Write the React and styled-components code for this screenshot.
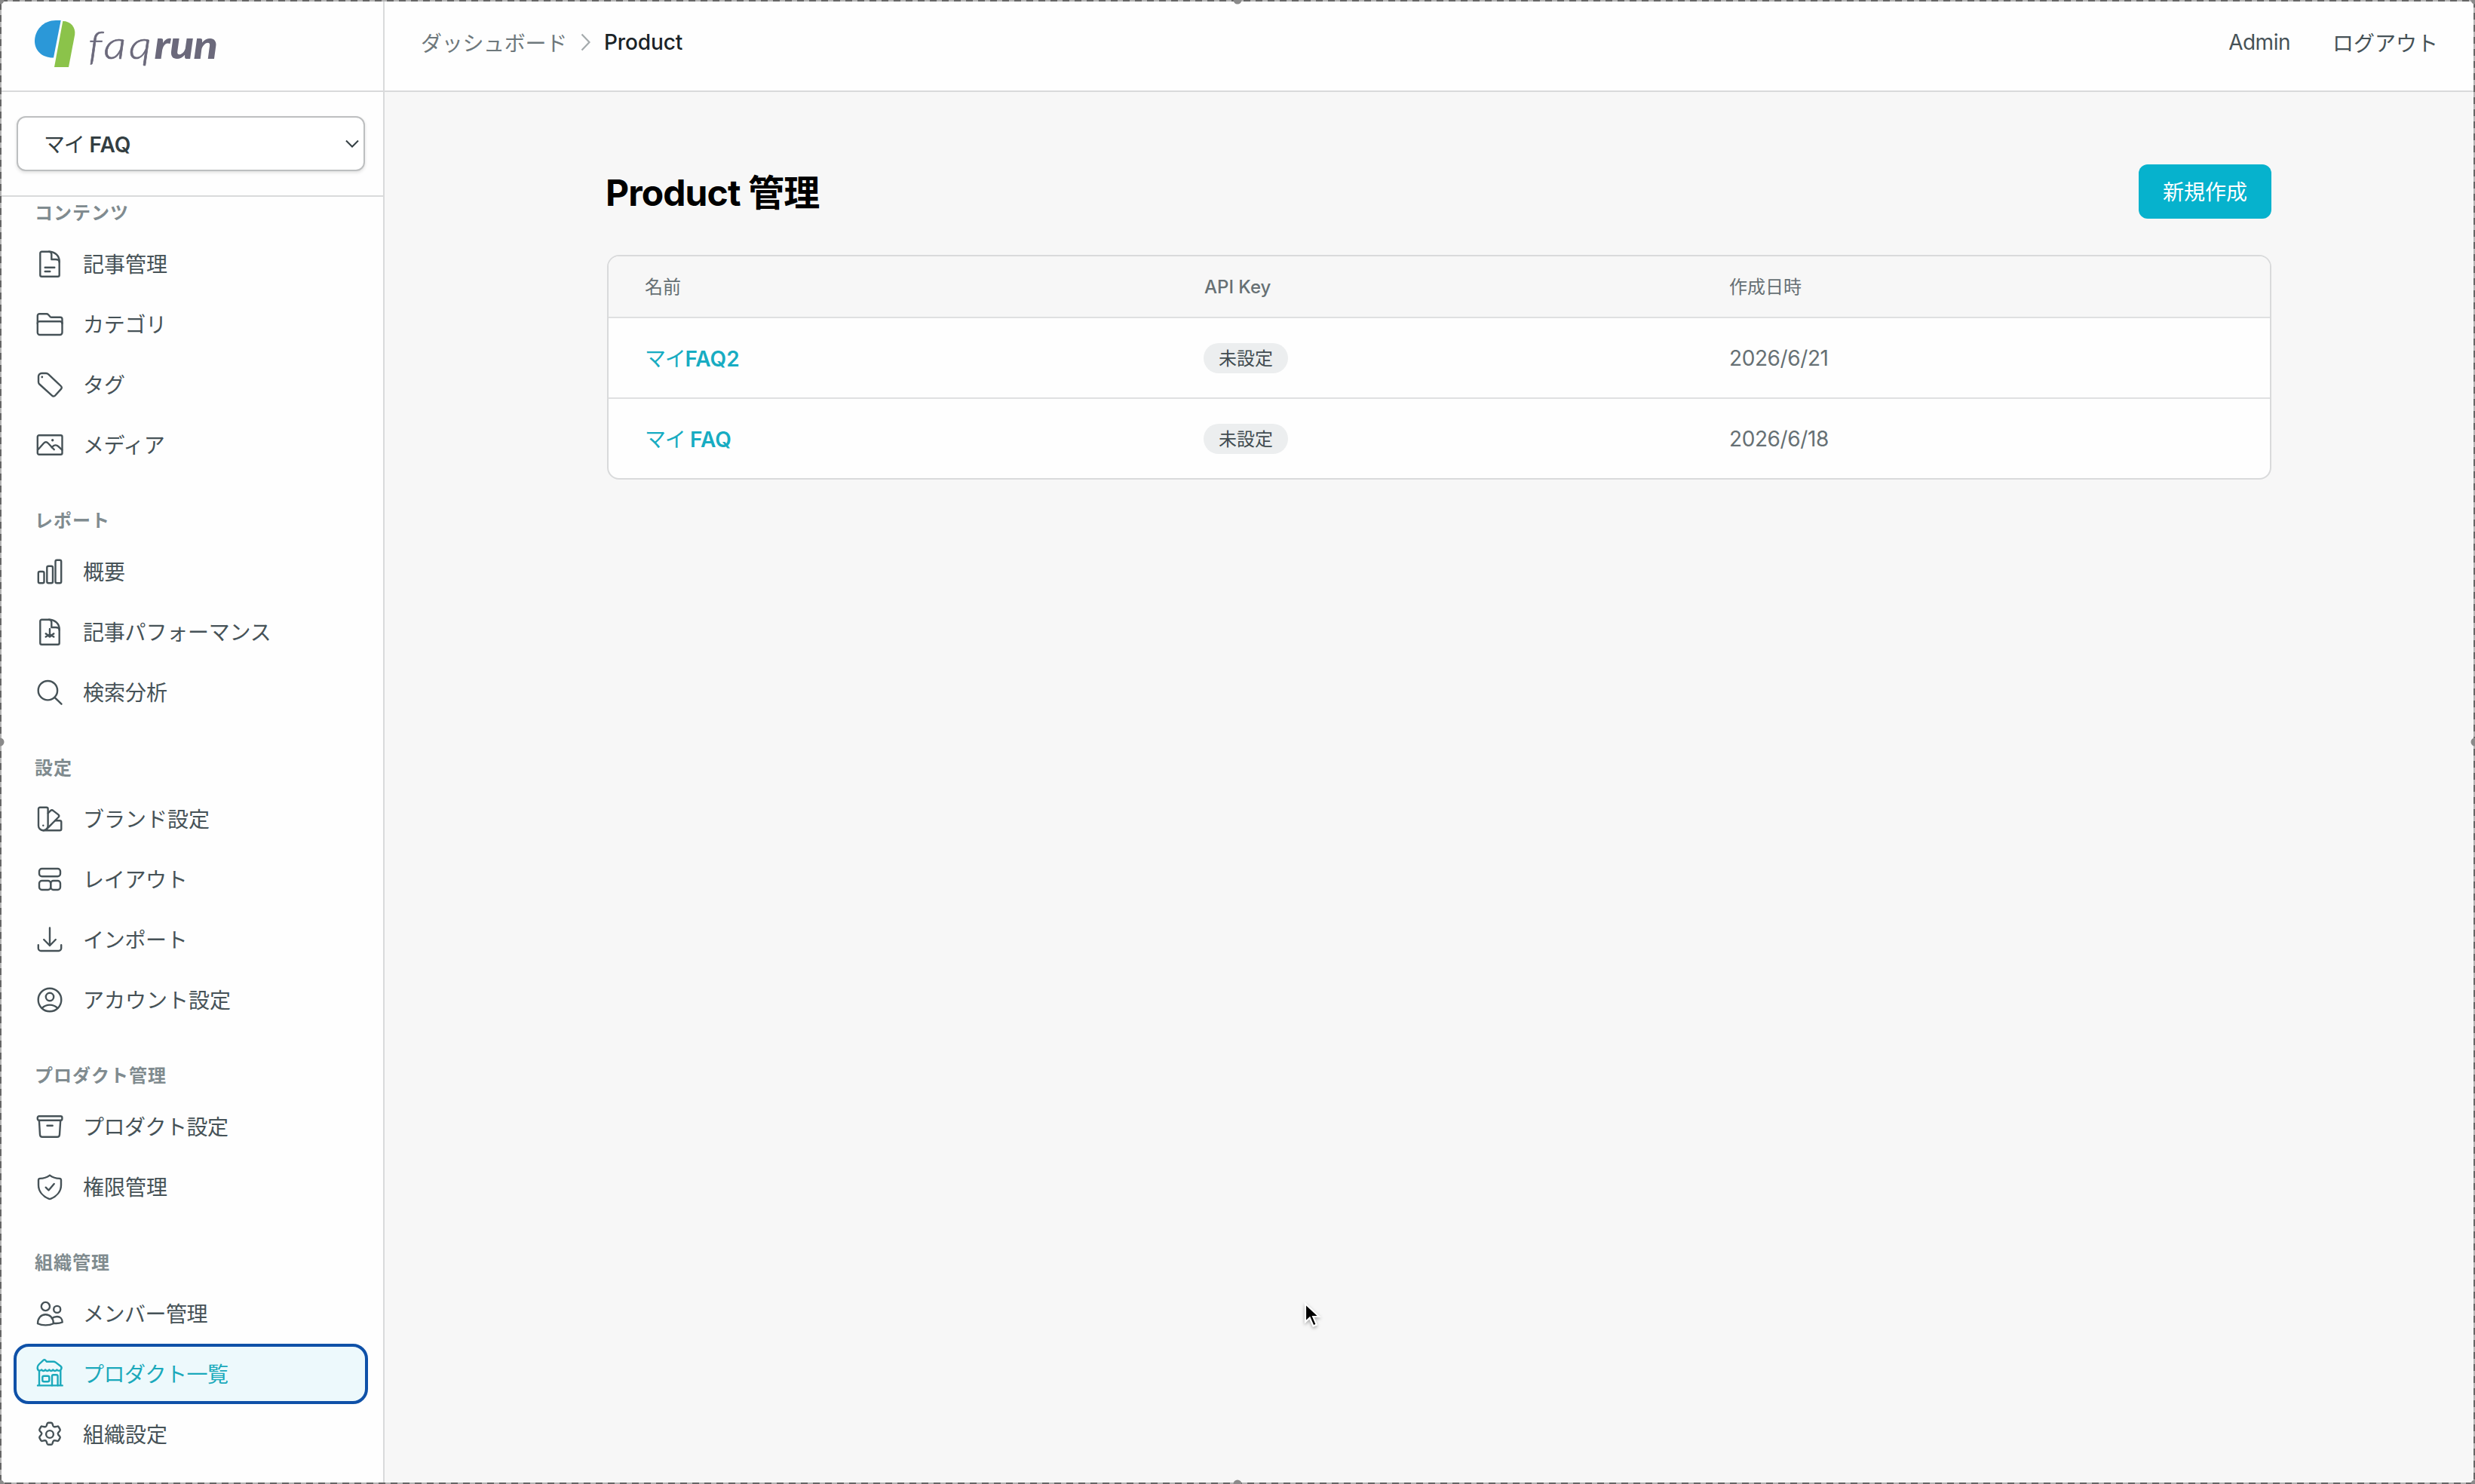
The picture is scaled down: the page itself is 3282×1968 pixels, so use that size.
import React from "react";
import styled, { createGlobalStyle } from "styled-components";

const GlobalStyle = createGlobalStyle`
  * {
    box-sizing: border-box;
  }

  body {
    margin: 0;
    overflow: hidden;
    font-family: Inter, "Noto Sans CJK JP", sans-serif;
    font-size: 28px;
    color: #465257;
    background: #f7f7f7;
  }
`;

const Wrapper = styled.div`
  position: relative;
  display: flex;
  width: 3282px;
  height: 1968px;
  overflow: hidden;
`;

const Sidebar = styled.aside`
  display: flex;
  flex-direction: column;
  flex: none;
  width: 510px;
  background: #fefefe;
  border-right: 2px solid #d9dadb;
`;

const LogoArea = styled.div`
  display: flex;
  flex: none;
  height: 122px;
  padding: 26px 0 0 45px;
  border-bottom: 2px solid #d9dadb;
`;

const LogoMark = styled.svg`
  flex: none;
  width: 56px;
  height: 64px;
`;

const LogoText = styled.div`
  margin-left: 16px;
  font-family: Lato, sans-serif;
  font-size: 51px;
  font-style: italic;
  font-weight: 300;
  line-height: 66px;
  letter-spacing: 3.2px;
  color: #6b697b;
  transform: scaleX(1.17);
  transform-origin: left center;
  -webkit-text-stroke: 0.6px #6b697b;

  & > b {
    font-weight: 900;
    letter-spacing: -0.8px;
    -webkit-text-stroke: 0;
  }
`;

const SelectArea = styled.div`
  flex: none;
  height: 139px;
  padding: 32px 24px 0 22px;
  border-bottom: 2px solid #d9dadb;
`;

const SelectBox = styled.div`
  display: flex;
  justify-content: space-between;
  align-items: center;
  height: 73px;
  padding: 0 6px 0 34px;
  border: 2px solid #bdbfc0;
  border-radius: 12px;
  background: #fff;
  box-shadow: 0 2px 4px rgba(0, 0, 0, 0.12);
  font-weight: 600;
  color: #333e42;

  & > div {
    padding-bottom: 2px;
  }
`;

const Kana = styled.span`
  font-weight: 400;
  letter-spacing: -1.3px;
`;

const Nav = styled.nav`
  display: flex;
  flex-direction: column;
  gap: 40px;
  padding: 1px 20px 0 18px;
`;

const SectionLabel = styled.div`
  height: 40px;
  margin-bottom: 8px;
  padding-left: 28px;
  font-size: 24px;
  font-weight: 700;
  line-height: 42px;
  letter-spacing: 1px;
  color: #808b8f;
`;

const NavItem = styled.div`
  display: flex;
  align-items: center;
  height: 80px;
  padding-left: 26px;
  border: 4px solid ${(props) => (props.$active ? "#0f51a8" : "transparent")};
  border-radius: 20px;
  background: ${(props) => (props.$active ? "#edf9fc" : "transparent")};
  color: ${(props) => (props.$active ? "#1ba9bb" : "#465257")};
  letter-spacing: ${(props) => props.$spacing ?? 0}px;
  white-space: nowrap;

  & > span {
    padding-bottom: 3px;
  }
`;

const Icon = styled.svg`
  flex: none;
  width: 36px;
  height: 36px;
  margin-right: 26px;
  overflow: visible;
  fill: none;
  stroke: currentColor;
  stroke-width: 2.4;
  stroke-linecap: round;
  stroke-linejoin: round;

  & .dot {
    fill: currentColor;
    stroke: none;
  }
`;

const Main = styled.main`
  flex: 1;
  min-width: 0;
`;

const Header = styled.header`
  display: flex;
  justify-content: space-between;
  height: 122px;
  padding: 0 49px 8px 48px;
  background: #fefefe;
  border-bottom: 2px solid #d9dadb;
`;

const Breadcrumb = styled.div`
  display: flex;
  align-items: center;
  color: #6e787c;

  & > span {
    letter-spacing: -0.3px;
  }

  & > svg {
    margin: 0 18px 0 18px;
  }

  & > strong {
    font-weight: 500;
    letter-spacing: -0.1px;
    color: #1a2327;
  }
`;

const HeaderLinks = styled.div`
  display: flex;
  align-items: center;
  gap: 56px;

  & > :first-child {
    letter-spacing: -0.5px;
  }
`;

const Content = styled.section`
  width: 2207px;
  margin: 96px auto 0 295px;
`;

const TitleRow = styled.div`
  display: flex;
  justify-content: space-between;
  align-items: center;
  height: 72px;
  margin-bottom: 48px;
`;

const Title = styled.h1`
  margin: 0 0 5px -2px;
  font-size: 48px;
  font-weight: 700;
  letter-spacing: -0.9px;
  color: #000;
`;

const CreateBtn = styled.button`
  width: 176px;
  height: 72px;
  padding: 0 0 2px;
  border: none;
  border-radius: 12px;
  background: #06b2cd;
  color: #fff;
  font-family: inherit;
  font-size: 28px;
  font-weight: 400;
`;

const Table = styled.div`
  border: 2px solid #d9dadb;
  border-radius: 16px;
  overflow: hidden;
  background: #fefefe;
`;

const Row = styled.div`
  display: grid;
  grid-template-columns: 742px 696px 1fr;
  align-items: center;
  height: 107px;
  border-bottom: 2px solid #dfe0e1;
  color: #667074;

  &:last-child {
    height: 105px;
    border-bottom: none;
  }
`;

const Cell = styled.div`
  padding-left: 48px;
`;

const HeadRow = styled(Row)`
  height: 82px;
  background: #f7f7f7;
  font-size: 24px;
`;

const HeadCell = styled(Cell)`
  padding-bottom: ${(props) => (props.$latin ? 0 : 3)}px;
  font-weight: ${(props) => (props.$latin ? 500 : 400)};
`;

const NameLink = styled.a`
  display: inline-block;
  padding-bottom: 2px;
  font-weight: 600;
  color: #17acc2;
`;

const DateCell = styled(Cell)`
  letter-spacing: -0.4px;
`;

const Badge = styled.span`
  display: flex;
  justify-content: center;
  align-items: center;
  width: 112px;
  height: 40px;
  margin-left: -1px;
  padding-bottom: 2px;
  border-radius: 20px;
  background: #eceeef;
  color: #414c51;
  font-size: 24px;
`;

const Cursor = styled.svg`
  position: absolute;
  top: 1724px;
  left: 1726px;
  filter: drop-shadow(0 2px 2px rgba(0, 0, 0, 0.3));
`;

// dashed selection frame that lies over the whole window
const Frame = styled.svg`
  position: absolute;
  inset: 0;
  pointer-events: none;
`;

const FILE = (
  <>
    <path d="M5.3 3.7a2 2 0 0 1 2-2H17C25 1.7 30.7 7.5 30.7 14.5v18.2a2 2 0 0 1-2 2H7.3a2 2 0 0 1-2-2Z" />
    <path d="M17 1.7c2.3 0 3.3 1.3 3.3 3.500V12h5.200c3 0 5.200 1 5.200 3.500" />
  </>
);

const ICONS = {
  article: (
    <>
      {FILE}
      <path d="M11.7 22.7h12.600M11.700 28h6.600" />
    </>
  ),
  folder: (
    <>
      <path d="M1.8 29V6.800a2.600 2.600 0 0 1 2.600-2.600h9.300c1 0 1.700.3 2.300 1l2.300 2.600c.6.600 1.300.9 2.200.9h11.400a2.600 2.600 0 0 1 2.600 2.600V29a3 3 0 0 1-3 3H4.800a3 3 0 0 1-3-3Z" />
      <path d="M1.800 17c0-1.800 1-2.700 2.700-2.700h27.300c1.700 0 2.700.9 2.700 2.700" />
    </>
  ),
  tag: (
    <>
      <path d="M3 7.500A4.300 4.300 0 0 1 7.300 3H13c1.200 0 2.200.4 3 1.200L32.800 20c1.200 1.200 1.200 2.700.2 3.900l-7.800 8.600c-1.200 1.300-3 1.300-4.200.1L4.300 17.500A4 4 0 0 1 3 14.500Z" />
      <circle className="dot" cx="7.800" cy="8" r="1.400" />
    </>
  ),
  media: (
    <>
      <rect x="1.800" y="5.200" width="32.700" height="25.600" rx="2" />
      <path d="m2 24.700 8-9c1.800-2 4-2 5.800 0l8 8.500M20.500 21.500l1.500-1.500c2-2 5.200-2 7.200-.1l5.100 4.700" />
      <circle className="dot" cx="21.700" cy="11.700" r="1.700" />
    </>
  ),
  bars: (
    <>
      <rect x="2.800" y="18" width="7.700" height="15.300" rx="2" />
      <rect x="14.300" y="10.700" width="7.700" height="22.600" rx="2" />
      <rect x="25.500" y="2.800" width="7.700" height="30.500" rx="2" />
    </>
  ),
  performance: (
    <>
      {FILE}
      <path d="M18 14v10.500M12.700 20.200l5.300 4.300 5.300-4.300M12.700 24.600l4-2.600M23.300 24.600l-4-2.600" />
    </>
  ),
  search: (
    <>
      <circle cx="15.400" cy="15.700" r="12.700" />
      <path d="m24.700 25.200 8.800 8.500" />
    </>
  ),
  brand: (
    <>
      <path d="M3 4.700a2 2 0 0 1 2-2h8.600a2 2 0 0 1 2 2V27a6.300 6.300 0 0 1-12.600 0Z" />
      <path d="m15.700 10.500 3.300-3.300c1.100-1.100 2.500-1.100 3.600-.1l6.800 5.300c1.100 1 1.100 2.100.3 3.100L13.800 31.700" />
      <path d="M25.500 20.300h5.800a2 2 0 0 1 2 2v9a2 2 0 0 1-2 2h-22" />
      <circle className="dot" cx="9.300" cy="26.700" r="1.200" />
    </>
  ),
  layout: (
    <>
      <rect x="4" y="4" width="28" height="10.300" rx="3.500" />
      <rect x="4" y="20" width="15.200" height="12" rx="3.500" />
      <rect x="19.200" y="20" width="12.800" height="12" rx="3.500" />
    </>
  ),
  download: (
    <>
      <path d="M18 2.500V26M10.200 18l7.800 8 7.800-8" />
      <path d="M2.800 25.300v4.200a3.500 3.500 0 0 0 3.500 3.500h23.400a3.500 3.500 0 0 0 3.500-3.500v-4.200" />
    </>
  ),
  account: (
    <>
      <circle cx="18" cy="18" r="15.300" />
      <circle cx="18" cy="14" r="5.200" />
      <path d="M7.700 28.800c2.800-2.700 6.300-4.200 10.300-4.200s7.500 1.500 10.300 4.200" />
    </>
  ),
  archive: (
    <>
      <rect x="1.800" y="4.200" width="32.600" height="5.600" rx="2" />
      <path d="M3.900 10 5 28.700c.1 2 1.300 3.100 3.200 3.100h19.600c1.900 0 3.100-1.100 3.200-3.100L32.200 10M14.500 16.700h7.200" />
    </>
  ),
  shield: (
    <>
      <path d="M18 2.600C14.300 5.300 9.500 6.800 5 6.900c-1.300.1-2 .8-2 2.100v6.500C3 24 9 30.500 16.500 33.700c1 .4 2 .4 3 0C27 30.500 33 24 33 15.500V9c0-1.300-.7-2-2-2.100-4.500-.1-9.300-1.600-13-4.300Z" />
      <path d="m12.700 18.700 3.800 3.800 7.200-8.500" />
    </>
  ),
  members: (
    <>
      <circle cx="12.400" cy="8.500" r="5.600" />
      <circle cx="27.700" cy="12.400" r="4.500" />
      <path d="M2 31.200C2 24 6.500 19.300 12.400 19.300S22.900 24 22.900 31.200c-3 1.500-6.700 2.200-10.500 2.200S5 32.700 2 31.200Z" />
      <path d="M20.800 24.300c2-1.600 4.300-2.300 6.900-2.300 4 0 7 3 7 7.500-3.700 1.500-7.700 1.800-11.700 1.300" />
    </>
  ),
  store: (
    <>
      <path d="M2.300 12.300c-1.400-3-.4-5.300 1.700-7.300L9.500-.2c1-.9 1.800-.9 2.600 0l1.700 1.900h9.400c.8 0 1.500.2 2.200.7l7 5.300c1.400 1.200 1.500 3 .3 4.800-1.800 1.700-3.800 1.700-5.200 0-1.700 2-3.700 2-5.200 0-1.500 2-3.500 2-5 0-1.600 2-3.600 2-5.200 0-1.500 2-3.500 2-5 0-1.400 1.500-3.300 1.500-5-.2Z" />
      <path d="M4 14v19.300M32.300 14v19.300M2 33.400h32.700" />
      <rect x="8.300" y="20.700" width="9" height="7.500" rx="2" />
      <path d="M21 33.300V21a1.800 1.800 0 0 1 1.800-1.800h4A1.800 1.800 0 0 1 28.600 21v12.300" />
    </>
  ),
  gear: (
    <>
      <path d="M14.600 3.900c.3-.8.900-1.200 1.700-1.200h3.400c.8 0 1.400.4 1.700 1.200l1 3c.4 1 1.300 1.500 2.300 1.300l3.200-.6c.8-.2 1.500.1 1.900.8l1.700 3c.4.700.3 1.400-.2 2l-2.100 2.500c-.7.800-.7 1.900 0 2.700l2.100 2.500c.5.600.6 1.300.2 2l-1.700 3c-.4.700-1.100 1-1.900.8l-3.200-.6c-1-.2-1.900.3-2.300 1.300l-1 3c-.3.800-.9 1.200-1.700 1.200h-3.400c-.8 0-1.400-.4-1.700-1.200l-1-3c-.4-1-1.300-1.500-2.300-1.300l-3.200.6c-.8.200-1.500-.1-1.900-.8l-1.700-3c-.4-.7-.3-1.400.2-2l2.100-2.500c.7-.8.700-1.900 0-2.700l-2.100-2.500c-.5-.6-.6-1.300-.2-2l1.700-3c.4-.7 1.100-1 1.900-.8l3.200.6c1 .2 1.900-.3 2.300-1.300Z" />
      <circle cx="18" cy="18" r="4.900" />
    </>
  ),
};

const SECTIONS = [
  {
    label: "コンテンツ",
    items: [
      { icon: "article", text: "記事管理" },
      { icon: "folder", text: "カテゴリ", spacing: -0.3 },
      { icon: "tag", text: "タグ" },
      { icon: "media", text: "メディア", spacing: -0.4 },
    ],
  },
  {
    label: "レポート",
    items: [
      { icon: "bars", text: "概要" },
      { icon: "performance", text: "記事パフォーマンス", spacing: -0.2 },
      { icon: "search", text: "検索分析" },
    ],
  },
  {
    label: "設定",
    items: [
      { icon: "brand", text: "ブランド設定" },
      { icon: "layout", text: "レイアウト", spacing: -0.3 },
      { icon: "download", text: "インポート", spacing: -0.3 },
      { icon: "account", text: "アカウント設定" },
    ],
  },
  {
    label: "プロダクト管理",
    items: [
      { icon: "archive", text: "プロダクト設定", spacing: -0.5 },
      { icon: "shield", text: "権限管理" },
    ],
  },
  {
    label: "組織管理",
    items: [
      { icon: "members", text: "メンバー管理", spacing: -0.5 },
      { icon: "store", text: "プロダクト一覧", spacing: -0.5, active: true },
      { icon: "gear", text: "組織設定" },
    ],
  },
];

const PRODUCTS = [
  { kana: "マイ", name: "FAQ2", date: "2026/6/21" },
  { kana: "マイ ", name: "FAQ", date: "2026/6/18" },
];

const HANDLES = [
  [0, 0],
  [1641, 0],
  [3282, 0],
  [0, 984],
  [3282, 984],
  [0, 1968],
  [1641, 1968],
  [3282, 1968],
];

const Logo = () => (
  <LogoArea>
    <LogoMark viewBox="45 26 56 64">
      <path
        d="M80.700 27 71 76.500C56.500 77 46 67.500 46 54.500 46 39.500 58 27 74 27Z"
        fill="#2b98d8"
      />
      <path
        d="M83.300 28C93.500 28 100.500 36 99.200 46L91 89H72Z"
        fill="#8bc34a"
      />
    </LogoMark>
    <LogoText>
      faq<b>run</b>
    </LogoText>
  </LogoArea>
);

const App = () => {
  return (
    <Wrapper>
      <GlobalStyle />
      <Sidebar>
        <Logo />
        <SelectArea>
          <SelectBox>
            <div>
              <Kana>マイ</Kana> FAQ
            </div>
            <svg width="18" height="12" viewBox="0 0 18 12" fill="none">
              <path d="m1 1.500 8 8 8-8" stroke="#333e42" strokeWidth="2" />
            </svg>
          </SelectBox>
        </SelectArea>
        <Nav>
          {SECTIONS.map((section) => (
            <div key={section.label}>
              <SectionLabel>{section.label}</SectionLabel>
              {section.items.map((item) => (
                <NavItem
                  key={item.text}
                  $active={item.active}
                  $spacing={item.spacing}
                >
                  <Icon viewBox="0 0 36 36">{ICONS[item.icon]}</Icon>
                  <span>{item.text}</span>
                </NavItem>
              ))}
            </div>
          ))}
        </Nav>
      </Sidebar>
      <Main>
        <Header>
          <Breadcrumb>
            <span>ダッシュボード</span>
            <svg width="13" height="24" viewBox="0 0 13 24" fill="none">
              <path d="m1.500 1.500 10 10.500-10 10.500" stroke="#a4aaac" strokeWidth="2.200" />
            </svg>
            <strong>Product</strong>
          </Breadcrumb>
          <HeaderLinks>
            <span>Admin</span>
            <span>ログアウト</span>
          </HeaderLinks>
        </Header>
        <Content>
          <TitleRow>
            <Title>Product 管理</Title>
            <CreateBtn>新規作成</CreateBtn>
          </TitleRow>
          <Table>
            <HeadRow>
              <HeadCell>名前</HeadCell>
              <HeadCell $latin>API Key</HeadCell>
              <HeadCell>作成日時</HeadCell>
            </HeadRow>
            {PRODUCTS.map((product) => (
              <Row key={product.name}>
                <Cell>
                  <NameLink>
                    <Kana>{product.kana}</Kana>
                    {product.name}
                  </NameLink>
                </Cell>
                <Cell>
                  <Badge>未設定</Badge>
                </Cell>
                <DateCell>{product.date}</DateCell>
              </Row>
            ))}
          </Table>
        </Content>
      </Main>
      <Cursor width="30" height="44" viewBox="0 0 30 44">
        <path
          d="M5 5v24l5.800-5.300 4.700 10.800 4.300-1.900-4.600-10.600h8Z"
          fill="#000"
          stroke="#fff"
          strokeWidth="2.200"
        />
      </Cursor>
      <Frame width="3282" height="1968" viewBox="0 0 3282 1968" fill="none">
        <rect x="1" y="1" width="3280" height="1966" stroke="#b4b4b4" strokeWidth="2" />
        <rect
          x="1"
          y="1"
          width="3280"
          height="1966"
          stroke="#666"
          strokeWidth="2"
          strokeDasharray="9 7"
        />
        {HANDLES.map(([x, y]) => (
          <circle key={`${x}-${y}`} cx={x} cy={y} r="5.500" fill="#8a8a8a" />
        ))}
      </Frame>
    </Wrapper>
  );
};

export default App;
